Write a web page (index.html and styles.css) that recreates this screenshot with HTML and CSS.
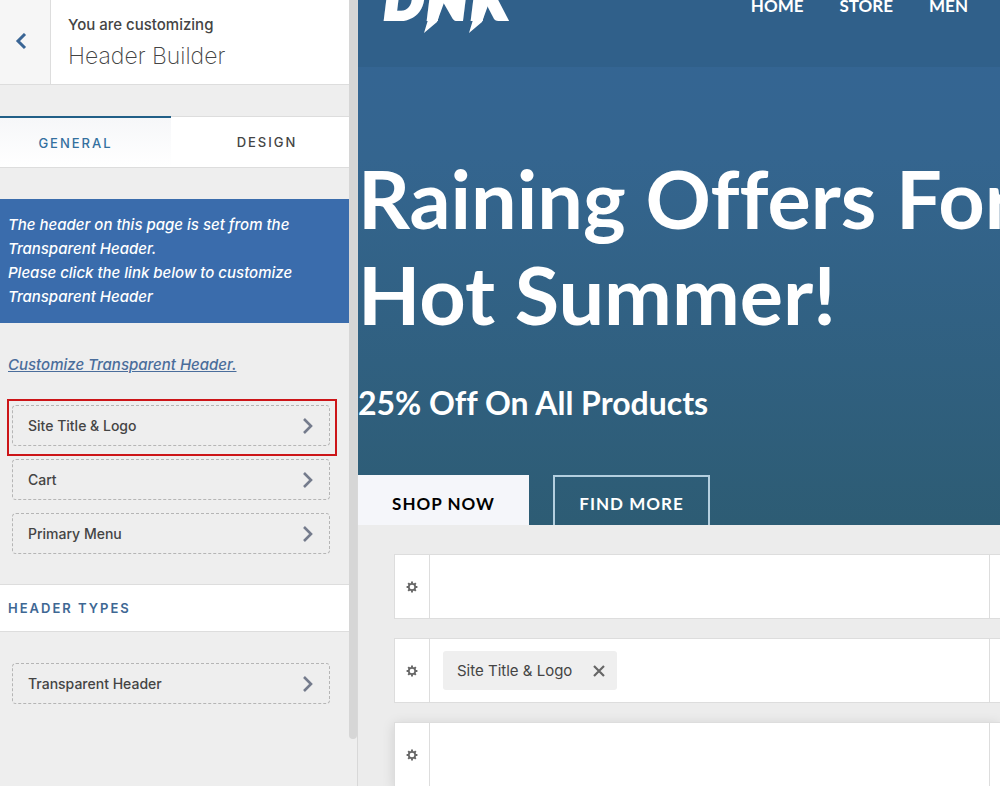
FILE: index.html
```
<!DOCTYPE html>
<html lang="en">
<head>
    <meta charset="UTF-8">
    <meta name="viewport" content="width=device-width, initial-scale=1">
    <title>Customize: Header Builder</title>
    <link rel="stylesheet" href="styles.css">
</head>
<body>

<svg class="sprite" aria-hidden="true">
    <symbol id="icon-next" viewBox="0 0 12 18">
        <path d="M2 2l7 7-7 7" fill="none" stroke="currentColor" stroke-width="2.6"/>
    </symbol>
    <symbol id="icon-gear" viewBox="0 0 12 12">
        <circle cx="6" cy="6" r="3.2" fill="none" stroke="currentColor" stroke-width="1.7"/>
        <path d="M6 .6v1.8M6 9.6v1.8M.6 6h1.8M9.6 6h1.8M2.2 2.2l1.3 1.3M8.5 8.5l1.3 1.3M2.2 9.8l1.3-1.3M8.5 3.5l1.3-1.3" stroke="currentColor" stroke-width="1.9"/>
    </symbol>
</svg>

<aside class="sidebar">
    <div class="controls">
        <header class="panel-title">
            <button class="back" aria-label="Back">
                <svg width="12" height="18" viewBox="0 0 12 18"><path d="M10 1L3 8l7 7" fill="none" stroke="currentColor" stroke-width="3"/></svg>
            </button>
            <div class="title-text">
                <span>You are customizing</span>
                <h1>Header Builder</h1>
            </div>
        </header>

        <div class="tabs">
            <button class="tab tab-general active">GENERAL</button>
            <button class="tab tab-design">DESIGN</button>
        </div>

        <p class="notice">The header on this page is set from the Transparent Header.<br>Please click the link below to customize Transparent Header</p>
        <a class="notice-link" href="#">Customize Transparent Header.</a>

        <div class="items">
            <button class="item highlighted">Site Title &amp; Logo <svg class="next"><use href="#icon-next"/></svg></button>
            <button class="item">Cart <svg class="next"><use href="#icon-next"/></svg></button>
            <button class="item">Primary Menu <svg class="next"><use href="#icon-next"/></svg></button>
        </div>

        <h2 class="section-title">HEADER TYPES</h2>
        <div class="items">
            <button class="item">Transparent Header <svg class="next"><use href="#icon-next"/></svg></button>
        </div>
    </div>
    <div class="scrollbar"><div class="thumb"></div></div>
</aside>

<main class="preview">
    <div class="site">
        <header class="site-header">
            <svg class="logo" width="130" height="34" viewBox="0 0 130 34" role="img" aria-label="DNK">
                <text y="19"><tspan x="1">D</tspan><tspan x="44">N</tspan><tspan x="88">K</tspan></text>
                <path d="M51 0L41 33L54 22L62 0zM96 0L86 33L99 22L107 0z"/>
            </svg>
            <nav class="menu">
                <a href="#">HOME</a>
                <a href="#">STORE</a>
                <a href="#">MEN</a>
            </nav>
        </header>
        <section class="hero">
            <h2>Raining Offers For<br>Hot Summer!</h2>
            <p>25% Off On All Products</p>
            <div class="actions">
                <button class="shop">SHOP NOW</button>
                <button class="find">FIND MORE</button>
            </div>
        </section>
    </div>

    <div class="builder">
        <div class="row">
            <button class="gear" aria-label="Above header settings"><svg><use href="#icon-gear"/></svg></button>
            <div class="zone"></div>
            <div class="zone-end"></div>
        </div>
        <div class="row">
            <button class="gear" aria-label="Primary header settings"><svg><use href="#icon-gear"/></svg></button>
            <div class="zone">
                <div class="chip">
                    <span>Site Title &amp; Logo</span>
                    <button class="remove" aria-label="Remove">
                        <svg width="12" height="12" viewBox="0 0 12 12"><path d="M1 1l10 10M11 1L1 11" stroke="currentColor" stroke-width="2.2"/></svg>
                    </button>
                </div>
            </div>
            <div class="zone-end"></div>
        </div>
        <div class="row raised">
            <button class="gear" aria-label="Below header settings"><svg><use href="#icon-gear"/></svg></button>
            <div class="zone"></div>
            <div class="zone-end"></div>
        </div>
    </div>
</main>

</body>
</html>
```
FILE: styles.css
```
* {
    box-sizing: border-box;
}
body {
    margin: 0;
    display: flex;
    height: 100vh;
    overflow: hidden;
    background: #eee;
    color: #444;
    font-family: Inter, "Liberation Sans", sans-serif;
    font-size: 15px;
    line-height: 24px;
}
button {
    margin: 0;
    padding: 0;
    border: 0;
    background: none;
    color: inherit;
    font: inherit;
    cursor: pointer;
}
h1, h2, p {
    margin: 0;
}
.sprite {
    display: none;
}

/* sidebar */
.sidebar {
    display: flex;
    flex: none;
    width: 358px;
    border-right: 1px solid #d8d8d8;
}
.controls {
    flex: 1;
}
.panel-title {
    display: flex;
    height: 85px;
    background: #fff;
    border-bottom: 1px solid #ddd;
}
.back {
    width: 51px;
    padding-right: 8px;
    background: #f6f6f6;
    border-right: 1px solid #ddd;
    color: #3a6595;
}
.back svg {
    display: block;
    margin: 0 auto;
}
.title-text {
    padding: 13px 17px;
}
.title-text span {
    display: block;
    font-weight: 500;
}
.title-text h1 {
    font-size: 23px;
    font-weight: 200;
    line-height: 38px;
}
.tabs {
    display: flex;
    height: 52px;
    margin: 31px 0;
    background: #fff;
    border-bottom: 1px solid #ddd;
}
.tab {
    border-top: 1px solid #ddd;
    font-size: 13px;
    font-weight: 500;
    letter-spacing: 2px;
}
.tab-general {
    width: 171px;
    padding-right: 20px;
}
.tab-design {
    flex: 1;
    padding-left: 14px;
}
.tab.active {
    border-top: 2px solid #215f87;
    background: linear-gradient(#f6f7f9, #fff);
    color: #34709f;
}
.notice {
    padding: 14px 8px;
    background: #3a6cac;
    color: #fff;
    font-style: italic;
    font-weight: 500;
}
.notice-link {
    display: block;
    margin: 30px 8px 28px;
    color: #4a6d9b;
    font-style: italic;
    font-weight: 500;
}
.items {
    display: flex;
    flex-direction: column;
    gap: 13px;
    margin: 0 19px 30px 12px;
}
.item {
    position: relative;
    display: flex;
    justify-content: space-between;
    align-items: center;
    height: 41px;
    padding: 0 15px;
    border: 1px dashed #b5b5b5;
    border-radius: 4px;
    font-size: 14px;
    font-weight: 500;
}
.item.highlighted::after {
    content: "";
    position: absolute;
    inset: -7px -8px -11px -6px;
    border: 2px solid #cc1518;
}
.next {
    width: 12px;
    height: 18px;
    color: #747b8c;
}
.section-title {
    padding: 11px 8px;
    margin-bottom: 31px;
    background: #fff;
    border-top: 1px solid #ddd;
    border-bottom: 1px solid #ddd;
    color: #3e6793;
    font-size: 13px;
    font-weight: 600;
    letter-spacing: 2px;
}
.scrollbar {
    width: 8px;
}
.thumb {
    height: 94%;
    background: #d6d6d6;
    border-radius: 0 0 4px 4px;
}

/* site preview */
.preview {
    display: flex;
    flex: 1;
    flex-direction: column;
    min-width: 0;
}
.site {
    flex: 1;
    min-height: 0;
    overflow: hidden;
    background: linear-gradient(#346595, #34658f 30%, #2d5c74);
    color: #fff;
    font-family: Lato, sans-serif;
    font-weight: 700;
    font-variant-ligatures: none;
}
.site-header {
    display: flex;
    justify-content: space-between;
    height: 67px;
    padding: 0 32px 0 25px;
    background: #30608a;
}
.logo {
    fill: #fff;
    stroke: #fff;
    font: italic 900 56px Lato, sans-serif;
}
.logo text {
    stroke-width: 4px;
}
.logo path {
    stroke: none;
}
.menu {
    display: flex;
    gap: 36px;
    height: 12px;
    align-items: center;
    font-size: 17px;
}
.menu a {
    color: #fff;
    text-decoration: none;
}
.hero {
    padding-top: 83px;
    white-space: nowrap;
}
.hero h2 {
    font-size: 81px;
    line-height: 96px;
}
.hero p {
    margin: 41px 0 52px;
    font-size: 32px;
    line-height: 40px;
}
.actions {
    display: flex;
    gap: 24px;
    font-size: 17px;
}
.actions button {
    height: 58px;
    letter-spacing: 1px;
}
.shop {
    width: 171px;
    background: #f5f6fa;
    color: #000;
}
.find {
    width: 157px;
    border: 2px solid #b4cfdf;
}

/* header rows */
.builder {
    display: flex;
    flex: none;
    flex-direction: column;
    gap: 19px;
    height: 261px;
    padding: 29px 0 0 36px;
    overflow: hidden;
    background: #ececec;
}
.row {
    display: flex;
    flex: none;
    height: 65px;
    background: #fff;
    border: 1px solid #ddd;
    border-right: 0;
}
.row.raised {
    box-shadow: 0 2px 12px rgba(0, 0, 0, 0.12);
}
.gear {
    width: 35px;
    border-right: 1px solid #ddd;
    color: #666;
}
.gear svg {
    display: block;
    width: 12px;
    height: 12px;
    margin: 0 auto;
}
.zone {
    display: flex;
    flex: 1;
    align-items: center;
    padding: 0 13px;
}
.zone-end {
    width: 11px;
    border-left: 1px solid #ddd;
}
.chip {
    display: flex;
    align-items: center;
    gap: 21px;
    height: 39px;
    padding: 0 12px 0 14px;
    background: #efefef;
    border-radius: 3px;
}
.remove {
    color: #666;
}
.remove svg {
    display: block;
}
```
